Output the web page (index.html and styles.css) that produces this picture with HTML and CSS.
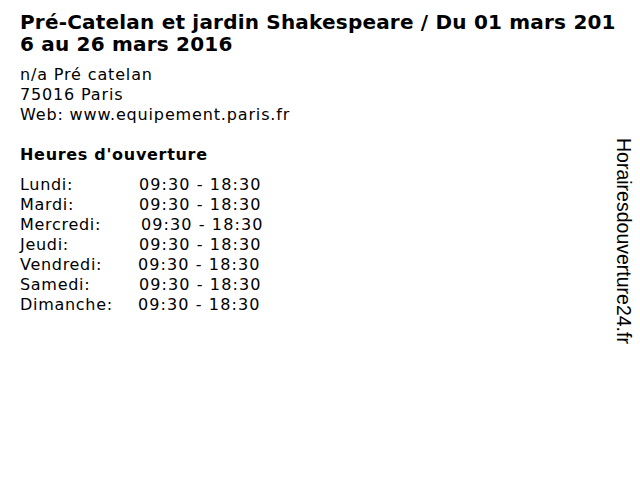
FILE: index.html
```html
<!DOCTYPE html>
<html lang="fr">
<head>
<meta charset="utf-8">
<link rel="stylesheet" href="styles.css">
</head>
<body>
<div class="page">
  <main class="content">
    <h1 class="title">Pré-Catelan et jardin Shakespeare / Du 01 mars 2016 au 26 mars 2016</h1>
    <div class="address">
      <div>n/a Pré catelan</div>
      <div>75016 Paris</div>
      <div>Web: www.equipement.paris.fr</div>
    </div>
    <h2 class="subtitle">Heures d'ouverture</h2>
    <div class="hours">
      <div class="row"><span class="day">Lundi:</span><span class="time">09:30 - 18:30</span></div>
      <div class="row"><span class="day">Mardi:</span><span class="time">09:30 - 18:30</span></div>
      <div class="row"><span class="day">Mercredi:</span><span class="time shift">09:30 - 18:30</span></div>
      <div class="row"><span class="day">Jeudi:</span><span class="time">09:30 - 18:30</span></div>
      <div class="row"><span class="day">Vendredi:</span><span class="time back">09:30 - 18:30</span></div>
      <div class="row"><span class="day">Samedi:</span><span class="time">09:30 - 18:30</span></div>
      <div class="row"><span class="day">Dimanche:</span><span class="time back">09:30 - 18:30</span></div>
    </div>
  </main>
  <aside class="side">Horairesdouverture24.fr</aside>
</div>
</body>
</html>
```
FILE: styles.css
```css
html, body {
  margin: 0;
  padding: 0;
  background: #fff;
}
body {
  font-family: "DejaVu Sans", Verdana, sans-serif;
  color: #000;
  width: 640px;
  height: 480px;
  overflow: hidden;
}
.page {
  display: flex;
  padding: 0 0 0 20px;
}
.content {
  width: 600px;
  padding-top: 11px;
}
.title {
  margin: 0;
  font-size: 20px;
  font-weight: bold;
  line-height: 22px;
  letter-spacing: 0.2px;
  word-break: break-all;
}
.address {
  margin-top: 10px;
  font-size: 16px;
  line-height: 20px;
  letter-spacing: 0.85px;
}
.subtitle {
  margin: 20px 0 0;
  font-size: 16px;
  font-weight: bold;
  line-height: 20px;
  letter-spacing: 0.7px;
}
.hours {
  margin-top: 10px;
  font-size: 16px;
  line-height: 20px;
}
.row {
  display: grid;
  grid-template-columns: 119px auto;
}
.day {
  letter-spacing: 0.7px;
}
.time {
  letter-spacing: 1.1px;
}
.shift {
  padding-left: 2px;
}
.back {
  margin-left: -1px;
}
.side {
  writing-mode: vertical-rl;
  font-family: "Liberation Sans", Arial, sans-serif;
  font-size: 19.5px;
  line-height: 20px;
  margin-top: 138px;
  height: 240px;
  margin-left: -6px;
}
```
